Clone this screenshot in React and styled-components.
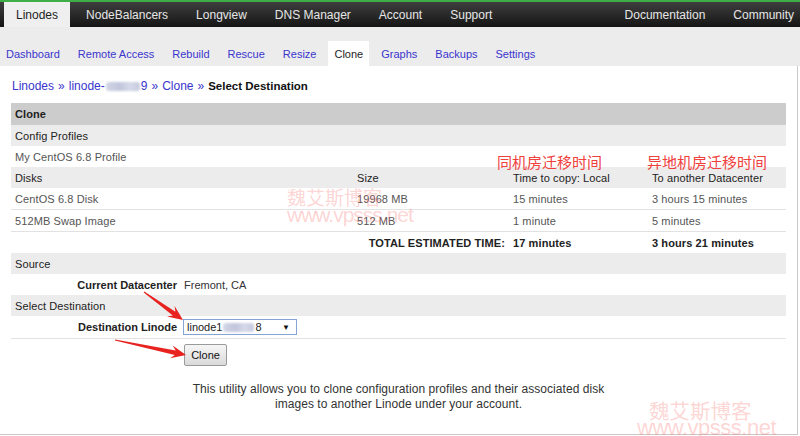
import React from 'react';
import styled, { createGlobalStyle } from 'styled-components';

const Global = createGlobalStyle`
  html, body { margin: 0; padding: 0; background: #fff; }
  body {
    font-family: "Liberation Sans", Arial, sans-serif;
    width: 800px; height: 436px; overflow: hidden;
  }
  * { box-sizing: border-box; }
`;

const Page = styled.div`
  position: relative;
  width: 800px;
  height: 436px;
  overflow: hidden;
  background: #fff;
`;

const TopBar = styled.div`
  height: 27px;
  border-top: 2px solid #3fae49;
  background: linear-gradient(#3e3e3e, #151515);
  display: flex;
  justify-content: space-between;
  padding-left: 4px;
`;

const NavGroup = styled.div`
  display: flex;
  gap: 4px;
  margin-right: ${p => (p.$right ? '-6px' : '0')};
`;

const NavItem = styled.a`
  display: flex;
  align-items: center;
  padding: 0 12px;
  font-size: 12px;
  color: ${p => (p.$active ? '#1e1e1e' : '#e6e6e6')};
  background: ${p => (p.$active ? '#efefef' : 'transparent')};
  text-decoration: none;
  white-space: nowrap;
`;

const SubBar = styled.div`
  height: 39px;
  background: #ececec;
  display: flex;
  align-items: flex-end;
  gap: 6px;
`;

const SubTab = styled.a`
  height: 25px;
  display: flex;
  align-items: center;
  padding: 1px 6px 0;
  font-size: 11px;
  color: ${p => (p.$active ? '#1e1e1e' : '#3a35cc')};
  background: ${p => (p.$active ? '#fff' : 'transparent')};
  text-decoration: none;
  white-space: nowrap;
`;

const Main = styled.div`
  height: 369px;
  padding: 0 0 0 11px;
  border-right: 1px solid #c9c9c9;
  border-bottom: 1px solid #c9c9c9;
  width: 798px;
`;

const Breadcrumb = styled.div`
  padding: 13px 0 0 1px;
  height: 37px;
  font-size: 12px;
  line-height: 14px;
  color: #222;
`;

const Crumb = styled.a`
  color: #3a35cc;
  text-decoration: none;
`;

const Sep = styled.span`
  color: #3a35cc;
  margin: 0 4px;
`;

const Redact = styled.span`
  display: inline-block;
  width: ${p => p.$w}px;
  height: 9px;
  margin: 0 1px;
  vertical-align: -1px;
  border-radius: 3px;
  background: linear-gradient(90deg, #d3d6e6, #c2c6dc 40%, #d6d9e8 70%, #c6cade);
  filter: blur(1.3px);
`;

const Current = styled.b`
  color: #111;
  font-size: 11.5px;
`;

const Table = styled.div`
  width: 775px;
  display: flex;
  flex-direction: column;
`;

const Row = styled.div`
  display: grid;
  grid-template-columns: 342px 156px 139px 1fr;
  align-items: center;
  height: ${p => p.$h || 21}px;
  font-size: 11px;
  color: ${p => (p.$muted ? '#555' : '#222')};
  font-weight: ${p => (p.$bold ? 'bold' : 'normal')};
  background: ${p =>
    p.$tone === 'head' ? '#cccccc' : p.$tone === 'band' ? '#ececec' : '#fff'};
  border-bottom: ${p => (p.$line ? '1px solid #e2e2e2' : 'none')};
`;

const Cell = styled.div`
  padding-left: 4px;
  white-space: nowrap;
  grid-column: ${p => p.$span || 'auto'};
  text-align: ${p => p.$align || 'left'};
  padding-right: ${p => (p.$align === 'right' ? '4px' : '0')};
  letter-spacing: 0.1px;
`;

const FormRow = styled.div`
  display: grid;
  grid-template-columns: 166px 1fr;
  column-gap: 6px;
  align-items: center;
  height: ${p => p.$h || 21}px;
  font-size: 11px;
  color: #333;
  border-bottom: ${p => (p.$line ? '1px solid #e2e2e2' : 'none')};
`;

const FormLabel = styled.div`
  text-align: right;
  font-weight: bold;
  color: #222;
`;

const FormValue = styled.div`
  padding-left: 1px;
`;

const FakeSelect = styled.div`
  width: 114px;
  height: 16px;
  border: 1px solid #86a3d6;
  background: #fff;
  display: flex;
  align-items: center;
  justify-content: space-between;
  padding: 0 6px 0 3px;
  font-size: 11px;
  color: #222;
`;

const Caret = styled.span`
  font-size: 8px;
  color: #111;
`;

const ButtonRow = styled.div`
  padding: 5px 0 0 173px;
`;

const Button = styled.button`
  width: 43px;
  height: 22px;
  font-family: inherit;
  font-size: 11px;
  color: #111;
  border: 1px solid #9a9a9a;
  border-radius: 2px;
  background: linear-gradient(#f6f6f6, #dadada);
  padding: 0;
`;

const Note = styled.p`
  width: 775px;
  margin: 16px 0 0;
  text-align: center;
  font-size: 12px;
  line-height: 15px;
  color: #333;
  letter-spacing: 0.05px;
`;

const Annot = styled.div`
  position: absolute;
  left: ${p => p.$x}px;
  top: ${p => p.$y}px;
  font-family: "Noto Sans CJK SC", sans-serif;
  font-size: 15px;
  line-height: 1;
  color: #f0403c;
  white-space: nowrap;
`;

const Mark = styled.div`
  position: absolute;
  left: ${p => p.$x}px;
  top: ${p => p.$y}px;
  font-family: ${p => (p.$cjk ? '"Noto Sans CJK SC", sans-serif' : '"Liberation Sans", sans-serif')};
  font-size: ${p => p.$size}px;
  letter-spacing: ${p => p.$ls || 0}px;
  line-height: 1;
  color: rgba(250, 110, 110, 0.3);
  white-space: nowrap;
  pointer-events: none;
`;

const Overlay = styled.svg`
  position: absolute;
  left: 0;
  top: 0;
  pointer-events: none;
`;

function arrowPoints(x1, y1, x2, y2) {
  const dx = x2 - x1, dy = y2 - y1;
  const len = Math.hypot(dx, dy);
  const ux = dx / len, uy = dy / len;
  const nx = -uy, ny = ux;
  const headLen = 15, headW = 13, tailW = 1.2, neckW = 4.5, inset = 4;
  const bx = x2 - ux * headLen, by = y2 - uy * headLen;
  const kx = x2 - ux * (headLen - inset), ky = y2 - uy * (headLen - inset);
  const pts = [
    [x1 + nx * tailW / 2, y1 + ny * tailW / 2],
    [kx + nx * neckW / 2, ky + ny * neckW / 2],
    [bx + nx * headW / 2, by + ny * headW / 2],
    [x2, y2],
    [bx - nx * headW / 2, by - ny * headW / 2],
    [kx - nx * neckW / 2, ky - ny * neckW / 2],
    [x1 - nx * tailW / 2, y1 - ny * tailW / 2],
  ];
  return pts.map(p => p.map(v => v.toFixed(1)).join(',')).join(' ');
}

const topNav = ['NodeBalancers', 'Longview', 'DNS Manager', 'Account', 'Support'];
const subTabs = ['Dashboard', 'Remote Access', 'Rebuild', 'Rescue', 'Resize', 'Clone', 'Graphs', 'Backups', 'Settings'];

export default function App() {
  return (
    <Page>
      <Global />
      <TopBar>
        <NavGroup>
          <NavItem $active>Linodes</NavItem>
          {topNav.map(n => <NavItem key={n}>{n}</NavItem>)}
        </NavGroup>
        <NavGroup $right>
          <NavItem>Documentation</NavItem>
          <NavItem>Community</NavItem>
        </NavGroup>
      </TopBar>
      <SubBar>
        {subTabs.map(t => <SubTab key={t} $active={t === 'Clone'}>{t}</SubTab>)}
      </SubBar>
      <Main>
        <Breadcrumb>
          <Crumb>Linodes</Crumb><Sep>»</Sep>
          <Crumb>linode-<Redact $w={34} />9</Crumb><Sep>»</Sep>
          <Crumb>Clone</Crumb><Sep>»</Sep>
          <Current>Select Destination</Current>
        </Breadcrumb>
        <Table>
          <Row $tone="head" $bold $h={22}><Cell>Clone</Cell></Row>
          <Row $tone="band"><Cell>Config Profiles</Cell></Row>
          <Row $muted><Cell>My CentOS 6.8 Profile</Cell></Row>
          <Row $tone="band">
            <Cell>Disks</Cell><Cell>Size</Cell><Cell>Time to copy: Local</Cell><Cell>To another Datacenter</Cell>
          </Row>
          <Row $muted $line $h={22}>
            <Cell>CentOS 6.8 Disk</Cell><Cell>19968 MB</Cell><Cell>15 minutes</Cell><Cell>3 hours 15 minutes</Cell>
          </Row>
          <Row $muted $line $h={22}>
            <Cell>512MB Swap Image</Cell><Cell>512 MB</Cell><Cell>1 minute</Cell><Cell>5 minutes</Cell>
          </Row>
          <Row $bold>
            <Cell $span="1 / span 2" $align="right">TOTAL ESTIMATED TIME:</Cell>
            <Cell>17 minutes</Cell><Cell>3 hours 21 minutes</Cell>
          </Row>
          <Row $tone="band"><Cell>Source</Cell></Row>
          <FormRow>
            <FormLabel>Current Datacenter</FormLabel>
            <FormValue>Fremont, CA</FormValue>
          </FormRow>
          <Row $tone="band"><Cell>Select Destination</Cell></Row>
          <FormRow $h={23} $line>
            <FormLabel>Destination Linode</FormLabel>
            <FakeSelect>
              <span>linode1<Redact $w={31} />8</span>
              <Caret>▼</Caret>
            </FakeSelect>
          </FormRow>
        </Table>
        <ButtonRow>
          <Button>Clone</Button>
        </ButtonRow>
        <Note>
          This utility allows you to clone configuration profiles and their associated disk<br />
          images to another Linode under your account.
        </Note>
      </Main>

      <Annot $x={497} $y={154}>同机房迁移时间</Annot>
      <Annot $x={647} $y={154}>异地机房迁移时间</Annot>

      <Mark $cjk $x={287} $y={187} $size={19}>魏艾斯博客</Mark>
      <Mark $x={287} $y={204} $size={21} $ls={-1}>www.vpsss.net</Mark>
      <Mark $cjk $x={649} $y={400} $size={20.5}>魏艾斯博客</Mark>
      <Mark $x={637} $y={417} $size={22} $ls={-0.5}>www.vpsss.net</Mark>

      <Overlay width="800" height="436" viewBox="0 0 800 436">
        <polygon points={arrowPoints(144, 292, 183, 320)} fill="#e8231f" />
        <polygon points={arrowPoints(115, 340, 186, 355)} fill="#e8231f" />
      </Overlay>
    </Page>
  );
}
